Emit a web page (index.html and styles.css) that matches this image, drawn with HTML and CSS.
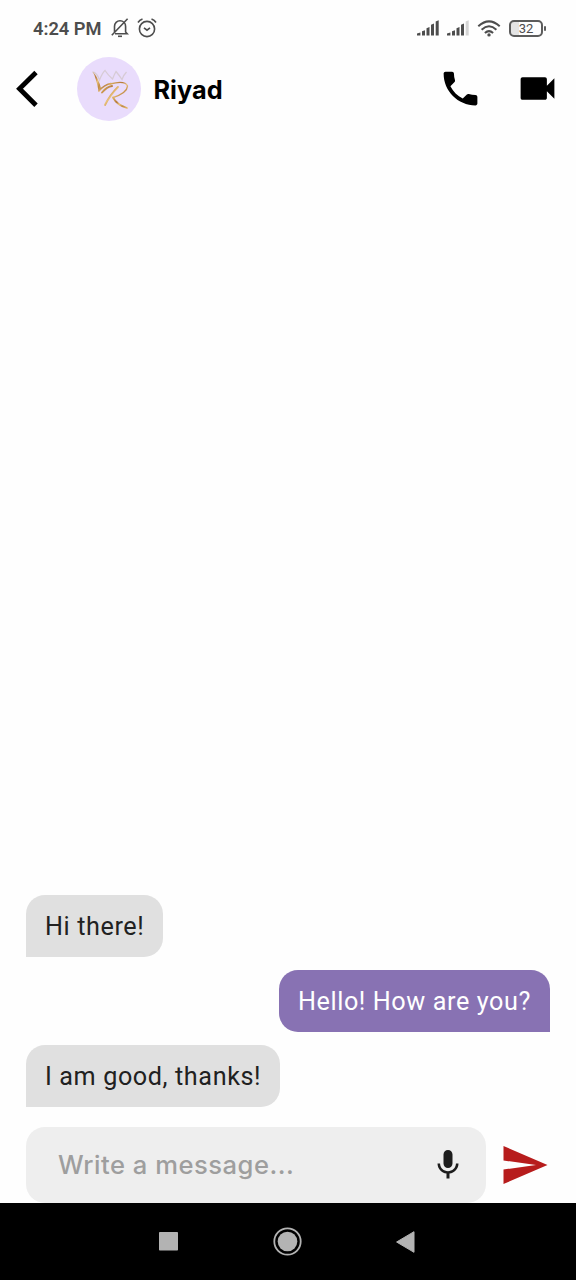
FILE: index.html
```html
<!DOCTYPE html>
<html lang="en">
<head>
<meta charset="utf-8">
<title>Riyad</title>
<link rel="stylesheet" href="styles.css">
</head>
<body>
<div class="screen">
  <div class="status">
    <span class="clock">4:24 PM</span>
    <svg class="bell" width="18" height="20" viewBox="0 0 18 20" fill="none" stroke="#4d4d4d" stroke-width="1.6"><path d="M3.5 15V8.500C3.500 5 6 2.800 9 2.800s5.600 2.200 5.600 5.700V14l1.700 1.800H4M.8 17.200 16.600.8"/><path d="M7 18.300h4"/></svg>
    <svg class="alarm" width="20" height="20" viewBox="0 0 20 20" fill="none" stroke="#4d4d4d" stroke-width="1.600"><circle cx="10" cy="11" r="7.600"/><path d="M1 4.500Q2.500 2 5.500 1M19 4.500Q17.500 2 14.500 1M7 9.800l3 2.400 3-2.400"/></svg>
    <div class="signals">
      <svg width="23" height="16" viewBox="0 0 23 16" fill="#4d4d4d"><path d="M0 15.500v-2l3.400-1v3zM5 11.200l3-1v5.300H5zM9.500 8.200l3-1.200v8.500h-3zM14 4.800l3-1.200v11.900h-3zM18.700 1.500l3-1.200v15.200h-3z"/></svg>
      <svg width="23" height="16" viewBox="0 0 23 16" fill="#4d4d4d"><path d="M0 15.500v-2l3.400-1v3zM5 11.200l3-1v5.300H5zM9.500 8.200l3-1.200v8.500h-3zM14 4.800l3-1.200v11.900h-3z"/><path fill="#d4d4d4" d="M18.700 1.500l3-1.200v15.200h-3z"/></svg>
      <svg class="wifi" width="24" height="17" viewBox="0 0 24 17" fill="none" stroke="#4d4d4d" stroke-width="2"><path d="M1.300 6.300Q12-3.600 22.700 6.300M4.600 9.700Q12 2.900 19.400 9.700M7.900 12.900Q12 9.300 16.100 12.900"/><circle cx="12" cy="14.900" r="1.700" fill="#4d4d4d" stroke="none"/></svg>
      <div class="battery"><span class="level">32</span></div><i class="cap"></i>
    </div>
  </div>

  <header class="header">
    <svg class="back" width="24" height="38" viewBox="0 0 24 38" fill="none" stroke="#000" stroke-width="4.800"><path d="M21 2.500 4.500 18.800l16.500 16.400"/></svg>
    <svg class="avatar" width="64" height="64" viewBox="0 0 64 64">
      <defs><linearGradient id="gold" x1="0" y1="0" x2="1" y2="1"><stop offset="0" stop-color="#dfb565"/><stop offset=".35" stop-color="#b5793a"/><stop offset=".55" stop-color="#e9c17a"/><stop offset=".75" stop-color="#c08a44"/><stop offset="1" stop-color="#e3b867"/></linearGradient></defs>
      <circle cx="32" cy="32" r="32" fill="#e9dcfc"/>
      <path d="M15.500 15 Q20 15.500 22.500 23 Q25.500 15.500 28 13.500 Q31 18 35.500 22 Q37.500 17 39 14.500 Q42 18 45 22.500 Q46.500 18 49.500 15" fill="none" stroke="#d7cbd5" stroke-width="1.300"/>
      <path d="M15.500 14.500 Q19 20 21.500 34 L24 31 Q21 20 15.500 14.500z" fill="url(#gold)"/>
      <g fill="none" stroke="url(#gold)" stroke-linecap="round"><path d="M22 34 Q27 28 34 26.500" stroke-width="1.700"/><path d="M33 27 Q48 23 50.500 29 Q50 36 36 40.500" stroke-width="1.400"/><path d="M25 35.500 Q30 29.500 35 29 M41 30 Q33 38 28 48" stroke-width="1.900"/><path d="M36 40.500 Q40 48 50 51" stroke-width="1.700"/></g>
    </svg>
    <h1 class="name">Riyad</h1>
    <svg class="call" width="45" height="45" viewBox="0 0 24 24"><path d="M6.620 10.790c1.440 2.830 3.760 5.140 6.590 6.590l2.200-2.200c.27-.27.67-.36 1.020-.24 1.120.37 2.330.57 3.570.57.550 0 1 .45 1 1V20c0 .55-.45 1-1 1C10.610 21 3 13.390 3 4c0-.55.45-1 1-1h3.500c.55 0 1 .45 1 1 0 1.250.2 2.450.57 3.570.11.35.03.74-.25 1.020l-2.200 2.200z"/></svg>
    <svg class="video" width="45" height="45" viewBox="0 0 24 24"><path d="M17 10.500V7c0-.55-.45-1-1-1H4c-.55 0-1 .45-1 1v10c0 .55.45 1 1 1h12c.55 0 1-.45 1-1v-3.500l4 4v-11l-4 4z"/></svg>
  </header>

  <main class="chat">
    <div class="bubble received">Hi there!</div>
    <div class="bubble sent">Hello! How are you?</div>
    <div class="bubble received">I am good, thanks!</div>
  </main>

  <div class="composer">
    <div class="field">
      <span class="placeholder">Write a message...</span>
      <svg width="36" height="36" viewBox="0 0 24 24" fill="#1d1d1d"><path d="M12 14c1.660 0 2.990-1.340 2.990-3L15 5c0-1.660-1.340-3-3-3S9 3.340 9 5v6c0 1.660 1.340 3 3 3zm5.300-3c0 3-2.540 5.100-5.300 5.100S6.700 14 6.700 11H5c0 3.410 2.720 6.230 6 6.720V21h2v-3.280c3.280-.48 6-3.300 6-6.720h-1.700z"/></svg>
    </div>
    <svg class="send" width="45" height="39" viewBox="0 0 45 39" fill="#b71c1c"><path d="M.5 0 44.500 19 .5 38V23.500L33 19 .5 14.500z"/></svg>
  </div>

  <nav class="navbar">
    <svg width="19" height="19" viewBox="0 0 19 19"><rect width="19" height="18.500" rx=".8" fill="#b3b3b3"/></svg>
    <svg width="29" height="29" viewBox="0 0 29 29"><circle cx="14.500" cy="14.500" r="13.200" fill="none" stroke="#b3b3b3" stroke-width="1.800"/><circle cx="14.500" cy="14.500" r="9.800" fill="#b3b3b3"/></svg>
    <svg width="19" height="22" viewBox="0 0 19 22"><path d="M18 .7v20.600L.6 11z" fill="#b3b3b3" stroke="#b3b3b3" stroke-linejoin="round"/></svg>
  </nav>
</div>
</body>
</html>
```
FILE: styles.css
```css
* { box-sizing: border-box; }
body { margin: 0; background: #fefefe; font-family: Roboto, "Liberation Sans", sans-serif; }
svg { display: block; flex: none; }
.screen { width: 576px; height: 1280px; display: flex; flex-direction: column; }

.status { height: 56px; flex: none; display: flex; align-items: center; padding: 0 30px 0 33px; color: #4d4d4d; }
.clock { width: 78px; padding-top: 1px; font: 600 18.300px/24px Roboto, sans-serif; white-space: nowrap; }
.alarm { margin-left: 8px; }
.signals { margin-left: auto; display: flex; align-items: center; gap: 7px; }
.signals svg:nth-child(-n+2) { position: relative; left: 1px; }
.wifi { margin-left: 1px; }
.battery { width: 34px; height: 17px; margin-left: 1px; border: 2px solid #5c5c5c; border-radius: 5px; background: linear-gradient(90deg, #e4e4e4 8px, transparent 8px); display: flex; align-items: center; justify-content: center; }
.level { font: 400 13px/13px Roboto, sans-serif; }
.cap { width: 2px; height: 5px; margin-left: -6px; border-radius: 1px; background: #5c5c5c; }

.header { height: 66px; flex: none; display: flex; align-items: center; padding: 0 16px 0 15px; }
.avatar { margin-left: 38px; }
.name { margin: 2px auto 0 12.500px; font: 700 25.300px/30px Inter, Roboto, sans-serif; color: #000; }
.call, .video { margin-bottom: 1px; }
.video { margin-left: 32px; }

.chat { flex: 1; display: flex; flex-direction: column; justify-content: flex-end; gap: 13px; padding: 0 26px 20px; }
.bubble { height: 62px; padding: 1px 19px 0; border-radius: 19px; font-size: 25.200px; line-height: 62px; letter-spacing: .6px; white-space: nowrap; }
.received { align-self: flex-start; background: #e0e0e0; color: #212121; border-bottom-left-radius: 0; }
.sent { align-self: flex-end; background: #8872b3; color: #fff; border-bottom-right-radius: 0; }

.composer { height: 76px; flex: none; display: flex; align-items: center; padding-left: 26px; }
.field { width: 460px; height: 76px; display: flex; align-items: center; justify-content: space-between; padding: 0 20px 0 32px; border-radius: 19px; background: #eee; }
.placeholder { font: 500 25.600px/32px Inter, Roboto, sans-serif; letter-spacing: .5px; color: #9e9e9e; }
.send { margin-left: 17px; }

.navbar { height: 77px; flex: none; display: flex; align-items: center; gap: 95px; padding-left: 159px; background: #000; }
.navbar svg:last-child { margin-left: -1px; }
```
